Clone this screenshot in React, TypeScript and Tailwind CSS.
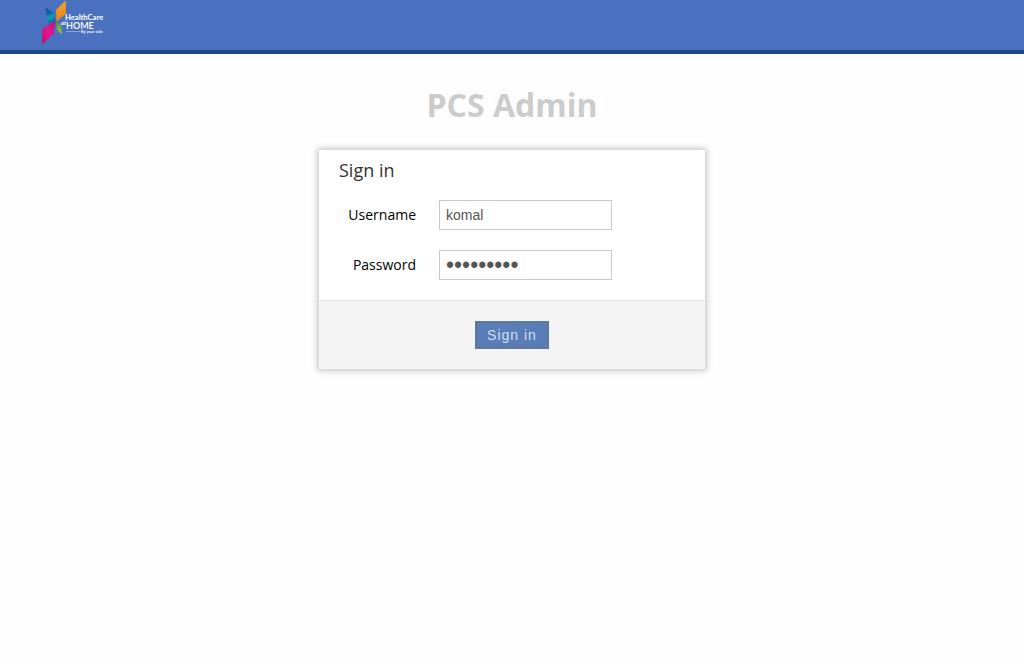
import React from "react";

function Logo() {
  return (
    <svg width="68" height="46" viewBox="41 0 68 46" role="img" aria-label="HealthCare at HOME">
      <defs>
        <linearGradient id="orange" x1="0" y1="0" x2="0" y2="1">
          <stop offset="0" stopColor="#f7a51c" />
          <stop offset="1" stopColor="#ee7d22" />
        </linearGradient>
        <linearGradient id="teal" x1="0.2" y1="0" x2="0.5" y2="1">
          <stop offset="0" stopColor="#14519a" />
          <stop offset="0.4" stopColor="#0f6ba8" />
          <stop offset="0.65" stopColor="#0ba3b8" />
          <stop offset="1" stopColor="#1a5c8c" />
        </linearGradient>
        <linearGradient id="magenta" x1="0" y1="1" x2="1" y2="0">
          <stop offset="0" stopColor="#b8126a" />
          <stop offset="0.5" stopColor="#e8148f" />
          <stop offset="1" stopColor="#b3147c" />
        </linearGradient>
        <linearGradient id="green" x1="0" y1="0" x2="0" y2="1">
          <stop offset="0" stopColor="#3c9a45" />
          <stop offset="1" stopColor="#a5cb39" />
        </linearGradient>
      </defs>
      <path d="M65.7 0.5 66 13.5 56.5 21.5 56 10Z" fill="url(#orange)" />
      <path d="M45.5 7.5 54 13 55.7 21 48.5 23.5 47 17Z" fill="url(#teal)" />
      <path d="M55.7 20.5 53.5 34 42 44.5 42.2 29Z" fill="url(#magenta)" />
      <path d="M56.5 21 61 25 62 34.5 57 30Z" fill="url(#green)" />
      <g fill="#fff">
        <text x="65" y="20" fontSize="7.6" fontWeight="700" fontFamily="Lato, sans-serif">HealthCare</text>
        <text x="61" y="25" fontSize="5" fontStyle="italic" fontWeight="700" fontFamily="'Open Sans', sans-serif">at</text>
        <text x="66" y="28.500" fontSize="9" fontWeight="600" fontFamily="Lato, sans-serif">HOME</text>
        <path d="M66 31.5H80.5" stroke="#fff" strokeOpacity="0.5" strokeWidth="0.7" />
        <text x="81" y="33" fontSize="4" fontWeight="600" fontFamily="Lato, sans-serif">By your side</text>
      </g>
    </svg>
  );
}

const inputClass =
  "h-[30px] w-[173px] border border-[#c8c8c8] bg-white px-1.5 font-['Liberation_Sans',sans-serif] text-[#555] outline-none";

export default function App() {
  return (
    <div className="min-h-screen bg-[#fefefe] font-['Open_Sans','Noto_Sans',sans-serif] text-black">
      <header className="border-b-4 border-[#1b4a8a] bg-[#4a70c0] pl-[41px]">
        <div className="flex h-[50px] items-start">
          <Logo />
        </div>
      </header>
      <main className="flex flex-col items-center px-4">
        <h1 className="mt-[29px] text-[32px] leading-[44px] font-bold text-[#ccc]">PCS Admin</h1>
        <form
          className="mt-[23px] w-full max-w-[386px] bg-white shadow-[0_0_6px_2px_rgba(0,0,0,0.22)]"
          onSubmit={(e) => e.preventDefault()}
        >
          <h2 className="px-5 pt-2 text-lg leading-6 text-[#333]">Sign in</h2>
          <div className="flex flex-col gap-5 pt-[18px] pb-5">
            <div className="flex items-center gap-[23px]">
              <label htmlFor="username" className="w-[97px] text-right text-sm">Username</label>
              <input id="username" type="text" defaultValue="komal" className={`${inputClass} text-sm`} />
            </div>
            <div className="flex items-center gap-[23px]">
              <label htmlFor="password" className="w-[97px] text-right text-sm">Password</label>
              <input id="password" type="password" defaultValue="komal1234" className={`${inputClass} text-[23px]`} />
            </div>
          </div>
          <div className="flex justify-center border-t border-[#e2e2e2] bg-[#f4f4f4] py-5">
            <button
              type="submit"
              className="h-7 border border-[#587db8] bg-[#587db8] font-['Liberation_Sans',sans-serif] text-sm tracking-[1px] text-[#d5dff0]"
            >
              <span className="flex h-full items-center border border-dotted border-[#776a55] px-2.5">Sign in</span>
            </button>
          </div>
        </form>
      </main>
    </div>
  );
}
